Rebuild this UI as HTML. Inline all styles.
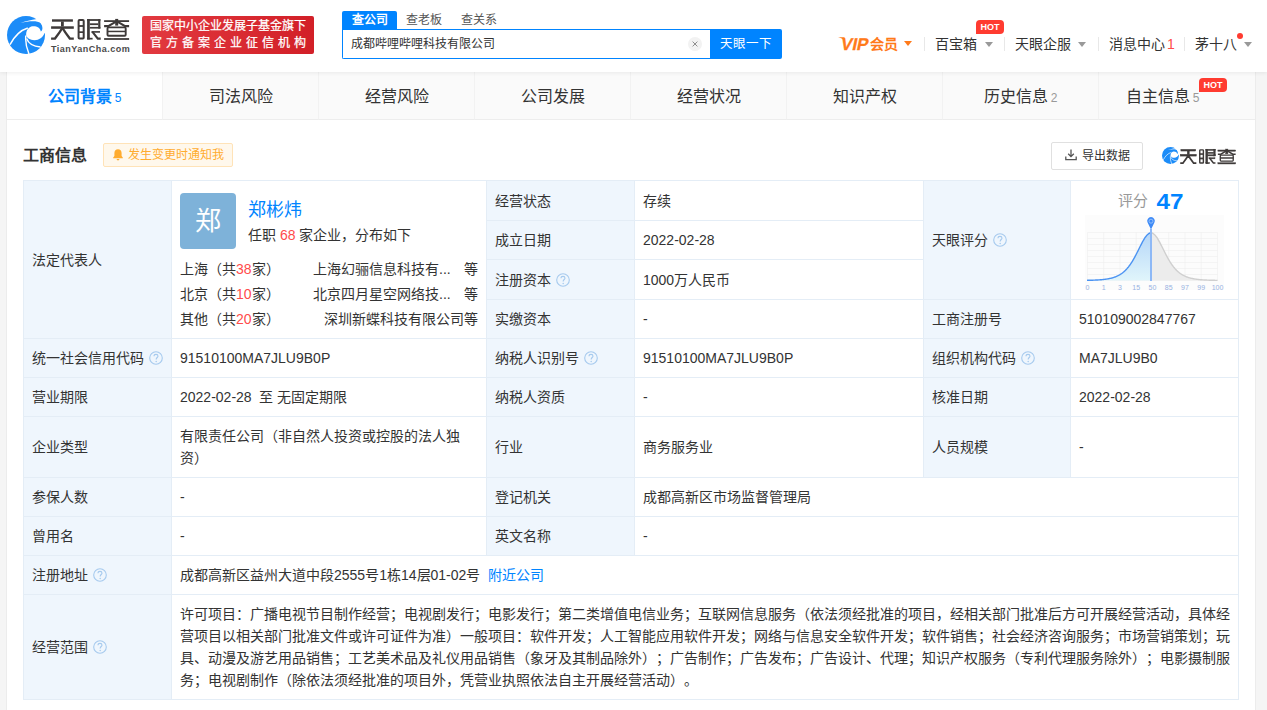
<!DOCTYPE html>
<html lang="zh-CN"><head><meta charset="utf-8">
<style>
*{box-sizing:border-box;margin:0;padding:0}
html,body{text-spacing-trim:space-all;width:1267px;height:710px;overflow:hidden;background:#f5f5f5;font-family:"Liberation Sans",sans-serif;color:#333;font-size:14px}
.abs{position:absolute}
#hdr{position:absolute;left:0;top:0;width:1267px;height:72px;background:#fff;box-shadow:0 1px 4px rgba(0,0,0,0.07);z-index:2}
#card{position:absolute;left:7px;top:72px;width:1248px;height:650px;background:#fff;box-shadow:0 0 0 1px #ececec}
.tabs{position:absolute;left:0;top:0;width:1248px;height:48px;background:#fafafa}
.tab{position:absolute;top:0;height:48px;width:156px;border-right:1px solid #f2f2f2;border-bottom:1px solid #ededed;font-size:16px;line-height:47px;padding-top:1px;text-align:center;color:#333}
.tab.on{background:#fff;color:#0084ff;font-weight:bold}
.tab sup{font-size:12px;color:#999;vertical-align:baseline;font-weight:normal;margin-left:3px}
.tab.on sup{color:#0084ff}
table{position:absolute;left:16px;top:108px;border-collapse:collapse;table-layout:fixed}
td{border:1px solid #e4edf6;padding:0 8px;font-size:14px;line-height:22px;color:#333;vertical-align:middle}
td.l{background:#eff6fd}
.q{display:inline-block;width:14px;height:14px;margin-left:5px;flex:none}
.red{color:#ff4b4b}

#tbl{position:absolute;left:0;top:0;z-index:3}
.c{position:absolute;border:1px solid #e4edf6;background:#fff;padding:0 8px;display:flex;align-items:center;font-size:14px;line-height:22px;color:#333;white-space:nowrap}
.c.l{background:#eff6fd}
.scope{white-space:normal}
.sl{white-space:nowrap;text-align:justify;text-align-last:justify;width:1050px}
.sl.last{text-align-last:left}
</style></head><body><svg width="0" height="0" style="position:absolute"><defs><g id="qi"><circle cx="7" cy="7" r="6.3" fill="none" stroke="#a6caee" stroke-width="1.1"/><path d="M5,5.3 C5,4 6,3.4 7,3.4 C8.1,3.4 9,4.1 9,5.2 C9,6.4 7.2,6.6 7.2,8.2 L7.2,8.6" fill="none" stroke="#a6caee" stroke-width="1.1"/><circle cx="7.2" cy="10.4" r="0.75" fill="#a6caee"/></g>
<g id="lt"><g fill="#3e3a39">
<rect x="52" y="19.3" width="20.9" height="2.4"/><rect x="61" y="21.5" width="2.8" height="5"/><rect x="51.1" y="26.3" width="22.7" height="2.5"/>

<rect x="87.1" y="19.1" width="2.7" height="20.4"/><rect x="87.1" y="19.1" width="13.3" height="1.8"/><rect x="98.2" y="19.1" width="2.2" height="9.5"/>
<rect x="89.8" y="23.3" width="8.4" height="1.8"/><rect x="89.8" y="26.9" width="10.6" height="1.7"/><rect x="87.1" y="37.8" width="5.5" height="1.7"/>
<rect x="91.5" y="31.1" width="8.5" height="1.6"/>
<rect x="104.1" y="20.2" width="25" height="1.8"/><rect x="115.2" y="18.9" width="3" height="6.7"/>
<rect x="104.1" y="38.1" width="25" height="1.8"/><rect x="107.5" y="30.7" width="18.2" height="1.5"/>
</g><g fill="none" stroke="#3e3a39">
<rect x="78.6" y="20.1" width="5.1" height="18.4" rx="0.8" stroke-width="2"/>
<path d="M116,21.6 L108.3,26.1 L104.1,26.1 M117.4,21.6 L125.1,26.1 L129.1,26.1" stroke-width="2.1"/><path d="M62.3,28 C60,32 57,36 55,38.6 L51.1,38.6 M62.5,28 C64.8,32 67.8,36 69.8,38.6 L73.8,38.6" stroke-width="2.4"/><path d="M92.3,31.6 L97.8,38.6 L100.7,38.6" stroke-width="2.1"/>
<rect x="107.5" y="27.4" width="18.2" height="8.4" rx="1" stroke-width="1.9"/>
</g><g fill="#3e3a39"><rect x="78.5" y="25.1" width="5.3" height="1.8"/><rect x="78.5" y="31.3" width="5.3" height="1.7"/></g></g>
<g id="logo">
<circle cx="19" cy="19" r="19" fill="#1c8cf8"/>
<path d="M13.4,6.9 C18,5.2 24,3.6 29.8,2.9 L40,-2 L40,17 L37.6,17 C36,21.5 32,24.2 27.5,24.2 C23,24.2 20,22 19.2,19.5 C18.8,14.5 21.5,10.8 25.5,10.2 C29.5,9.8 33.3,11.5 33.8,15.5 C36,14.5 36,10 33.5,7 C30.5,4.4 22,4.7 13.4,6.9 Z" fill="#fff"/>
<path d="M3,28.6 C7,21 12.5,14.5 20.8,12" fill="none" stroke="#fff" stroke-width="1.5"/>
<path d="M18.8,19.5 C18.2,26 19.2,31.5 22,38" fill="none" stroke="#fff" stroke-width="1.4"/>
<path d="M19.6,22.5 C21.5,27.5 26,30.5 33.5,31" fill="none" stroke="#fff" stroke-width="1.4"/>
</g></defs></svg>
<div id="hdr">
  <!-- logo -->
  <svg class="abs" style="left:7px;top:16px" width="38" height="38" viewBox="0 0 38 38"><use href="#logo"/></svg>
  <svg class="abs" style="left:48px;top:16px" width="86" height="28" viewBox="48 16 86 28"><use href="#lt"/></svg>
  <div class="abs" style="left:51px;top:43px;font-size:9px;line-height:12px;font-weight:bold;color:#4a4a4a;letter-spacing:0.5px">TianYanCha.com</div>
  <!-- red banner -->
  <div class="abs" style="left:142px;top:16px;width:172px;height:38px;border-radius:2px;background:linear-gradient(90deg,#e23a40,#d21f27);color:#fff;font-size:12px;line-height:17px;-webkit-text-stroke:0.25px #fff">
    <div class="abs" style="left:8px;top:2px;white-space:nowrap">国家中小企业发展子基金旗下</div>
    <div class="abs" style="left:8px;top:19px;white-space:nowrap;letter-spacing:4px">官方备案企业征信机构</div>
  </div>
  <!-- search -->
  <div class="abs" style="left:342px;top:11px;width:55px;height:18px;background:#0084ff;border-radius:2px 2px 0 0;color:#fff;font-size:12px;line-height:18px;text-align:center;font-weight:bold">查公司</div>
  <div class="abs" style="left:406px;top:11px;font-size:12px;line-height:18px;color:#555">查老板</div>
  <div class="abs" style="left:461px;top:11px;font-size:12px;line-height:18px;color:#555">查关系</div>
  <div class="abs" style="left:342px;top:29px;width:369px;height:30px;border:1px solid #0084ff;border-right:none;border-radius:0 0 0 2px;background:#fff"></div>
  <div class="abs" style="left:351px;top:35px;font-size:12px;line-height:18px;color:#333">成都哔哩哔哩科技有限公司</div>
  <svg class="abs" style="left:688px;top:37px" width="14" height="14" viewBox="0 0 14 14"><circle cx="7" cy="7" r="7" fill="#f2f2f2"/><path d="M4.6,4.6 L9.4,9.4 M9.4,4.6 L4.6,9.4" stroke="#8c8c8c" stroke-width="1"/></svg>
  <div class="abs" style="left:710px;top:29px;width:72px;height:30px;background:#0084ff;border-radius:0 2px 2px 0;color:#fff;font-size:12.5px;line-height:30px;text-align:center">天眼一下</div>
  <!-- right nav -->
  <div class="abs" style="left:839px;top:35px;font-size:17px;line-height:20px;color:#ff7a1a;font-weight:bold;white-space:nowrap;transform:skewX(-12deg);transform-origin:0 100%;-webkit-text-stroke:0.3px #ff7a1a">VIP</div><svg class="abs" style="left:838px;top:37px" width="8" height="5" viewBox="0 0 8 5"><path d="M0,0.2 L6.5,0.2 L7,3.6 C5,1.8 2.5,1 0,0.2Z" fill="#ff7a1a"/></svg><div class="abs" style="left:870px;top:35px;font-size:14px;line-height:18px;color:#ff7a1a;font-weight:bold;white-space:nowrap">会员</div>
  <div class="abs" style="left:904px;top:41px;width:0;height:0;border-left:4px solid transparent;border-right:4px solid transparent;border-top:5px solid #ff7a1a"></div>
  <div class="abs" style="left:924px;top:37px;width:1px;height:14px;background:#e8e8e8"></div>
  <div class="abs" style="left:935px;top:35px;font-size:14px;line-height:18px;color:#333">百宝箱</div>
  <div class="abs" style="left:985px;top:42px;width:0;height:0;border-left:4px solid transparent;border-right:4px solid transparent;border-top:5px solid #999"></div>
  <div class="abs" style="left:976px;top:20px;width:28px;height:14px;background:#ff3b30;border-radius:4px 4px 4px 0;color:#fff;font-size:9px;font-weight:bold;line-height:14px;text-align:center">HOT</div>
  <div class="abs" style="left:1004px;top:37px;width:1px;height:14px;background:#e8e8e8"></div>
  <div class="abs" style="left:1015px;top:35px;font-size:14px;line-height:18px;color:#333">天眼企服</div>
  <div class="abs" style="left:1078px;top:42px;width:0;height:0;border-left:4px solid transparent;border-right:4px solid transparent;border-top:5px solid #999"></div>
  <div class="abs" style="left:1098px;top:37px;width:1px;height:14px;background:#e8e8e8"></div>
  <div class="abs" style="left:1109px;top:35px;font-size:14px;line-height:18px;color:#333">消息中心<span class="red" style="margin-left:2px">1</span></div>
  <div class="abs" style="left:1184px;top:37px;width:1px;height:14px;background:#e8e8e8"></div>
  <div class="abs" style="left:1195px;top:35px;font-size:14px;line-height:18px;color:#333">茅十八</div>
  <div class="abs" style="left:1237px;top:33px;width:6px;height:6px;border-radius:50%;background:#ff3b30"></div>
  <div class="abs" style="left:1244px;top:42px;width:0;height:0;border-left:4px solid transparent;border-right:4px solid transparent;border-top:5px solid #999"></div>
</div>

<div id="card">
  <div class="tabs">
    <div class="tab on" style="left:0">公司背景<sup>5</sup></div>
    <div class="tab" style="left:156px">司法风险</div>
    <div class="tab" style="left:312px">经营风险</div>
    <div class="tab" style="left:468px">公司发展</div>
    <div class="tab" style="left:624px">经营状况</div>
    <div class="tab" style="left:780px">知识产权</div>
    <div class="tab" style="left:936px">历史信息<sup>2</sup></div>
    <div class="tab" style="left:1092px;border-right:none;padding-right:29px">自主信息<sup>5</sup></div>
  </div>
  <!-- section title -->
  <div class="abs" style="left:16px;top:73px;font-size:16px;line-height:22px;font-weight:bold;color:#333">工商信息</div>
</div>
<div id="tbl">
<div class="c l" style="left:23px;top:180px;width:149px;height:159px">法定代表人</div>
<div class="c" style="left:171px;top:180px;width:316px;height:159px"><!--rep--></div>
<div class="c l" style="left:486px;top:180px;width:149px;height:41px">经营状态</div>
<div class="c" style="left:634px;top:180px;width:290px;height:41px">存续</div>
<div class="c l" style="left:486px;top:220px;width:149px;height:40px">成立日期</div>
<div class="c" style="left:634px;top:220px;width:290px;height:40px">2022-02-28</div>
<div class="c l" style="left:486px;top:259px;width:149px;height:41px">注册资本<svg class="q" viewBox="0 0 14 14"><use href="#qi"/></svg></div>
<div class="c" style="left:634px;top:259px;width:290px;height:41px">1000万人民币</div>
<div class="c l" style="left:486px;top:299px;width:149px;height:40px">实缴资本</div>
<div class="c" style="left:634px;top:299px;width:290px;height:40px">-</div>
<div class="c l" style="left:923px;top:180px;width:148px;height:120px">天眼评分<svg class="q" viewBox="0 0 14 14"><use href="#qi"/></svg></div>
<div class="c" style="left:1070px;top:180px;width:169px;height:120px"><!--chart--></div>
<div class="c l" style="left:923px;top:299px;width:148px;height:40px">工商注册号</div>
<div class="c" style="left:1070px;top:299px;width:169px;height:40px">510109002847767</div>
<div class="c l" style="left:23px;top:338px;width:149px;height:40px">统一社会信用代码<svg class="q" viewBox="0 0 14 14"><use href="#qi"/></svg></div>
<div class="c" style="left:171px;top:338px;width:316px;height:40px">91510100MA7JLU9B0P</div>
<div class="c l" style="left:486px;top:338px;width:149px;height:40px">纳税人识别号<svg class="q" viewBox="0 0 14 14"><use href="#qi"/></svg></div>
<div class="c" style="left:634px;top:338px;width:290px;height:40px">91510100MA7JLU9B0P</div>
<div class="c l" style="left:923px;top:338px;width:148px;height:40px">组织机构代码<svg class="q" viewBox="0 0 14 14"><use href="#qi"/></svg></div>
<div class="c" style="left:1070px;top:338px;width:169px;height:40px">MA7JLU9B0</div>
<div class="c l" style="left:23px;top:377px;width:149px;height:40px">营业期限</div>
<div class="c" style="left:171px;top:377px;width:316px;height:40px">2022-02-28&nbsp; 至 无固定期限</div>
<div class="c l" style="left:486px;top:377px;width:149px;height:40px">纳税人资质</div>
<div class="c" style="left:634px;top:377px;width:290px;height:40px">-</div>
<div class="c l" style="left:923px;top:377px;width:148px;height:40px">核准日期</div>
<div class="c" style="left:1070px;top:377px;width:169px;height:40px">2022-02-28</div>
<div class="c l" style="left:23px;top:416px;width:149px;height:62px">企业类型</div>
<div class="c" style="left:171px;top:416px;width:316px;height:62px">有限责任公司（非自然人投资或控股的法人独<br>资）</div>
<div class="c l" style="left:486px;top:416px;width:149px;height:62px">行业</div>
<div class="c" style="left:634px;top:416px;width:290px;height:62px">商务服务业</div>
<div class="c l" style="left:923px;top:416px;width:148px;height:62px">人员规模</div>
<div class="c" style="left:1070px;top:416px;width:169px;height:62px">-</div>
<div class="c l" style="left:23px;top:477px;width:149px;height:40px">参保人数</div>
<div class="c" style="left:171px;top:477px;width:316px;height:40px">-</div>
<div class="c l" style="left:486px;top:477px;width:149px;height:40px">登记机关</div>
<div class="c" style="left:634px;top:477px;width:605px;height:40px">成都高新区市场监督管理局</div>
<div class="c l" style="left:23px;top:516px;width:149px;height:40px">曾用名</div>
<div class="c" style="left:171px;top:516px;width:316px;height:40px">-</div>
<div class="c l" style="left:486px;top:516px;width:149px;height:40px">英文名称</div>
<div class="c" style="left:634px;top:516px;width:605px;height:40px">-</div>
<div class="c l" style="left:23px;top:555px;width:149px;height:40px">注册地址<svg class="q" viewBox="0 0 14 14"><use href="#qi"/></svg></div>
<div class="c" style="left:171px;top:555px;width:1068px;height:40px">成都高新区益州大道中段2555号1栋14层01-02号 <span style="color:#0084ff;margin-left:8px">附近公司</span></div>
<div class="c l" style="left:23px;top:594px;width:149px;height:106px">经营范围<svg class="q" viewBox="0 0 14 14"><use href="#qi"/></svg></div>
<div class="c" style="left:171px;top:594px;width:1068px;height:106px"><div class="scope"><div class="sl">许可项目：广播电视节目制作经营；电视剧发行；电影发行；第二类增值电信业务；互联网信息服务（依法须经批准的项目，经相关部门批准后方可开展经营活动，具体经</div><div class="sl">营项目以相关部门批准文件或许可证件为准）一般项目：软件开发；人工智能应用软件开发；网络与信息安全软件开发；软件销售；社会经济咨询服务；市场营销策划；玩</div><div class="sl">具、动漫及游艺用品销售；工艺美术品及礼仪用品销售（象牙及其制品除外）；广告制作；广告发布；广告设计、代理；知识产权服务（专利代理服务除外）；电影摄制服</div><div class="sl last">务；电视剧制作（除依法须经批准的项目外，凭营业执照依法自主开展经营活动）。</div></div></div>
</div>
<svg class="abs" style="left:1071px;top:181px;z-index:4" width="167" height="118" viewBox="0 0 167 118">
<defs><linearGradient id="bg1" x1="0" y1="0" x2="0" y2="1"><stop offset="0" stop-color="#b5d6f8"/><stop offset="1" stop-color="#e0f5fb"/></linearGradient></defs>
<rect x="14" y="34" width="139" height="75" fill="#fcfcfc"/>
<g stroke="#eeeeee" stroke-width="0.6" fill="none"><line x1="16.50" y1="51.5" x2="16.50" y2="99.5"/><line x1="32.75" y1="51.5" x2="32.75" y2="99.5"/><line x1="49.00" y1="51.5" x2="49.00" y2="99.5"/><line x1="65.25" y1="51.5" x2="65.25" y2="99.5"/><line x1="81.50" y1="51.5" x2="81.50" y2="99.5"/><line x1="97.75" y1="51.5" x2="97.75" y2="99.5"/><line x1="114.00" y1="51.5" x2="114.00" y2="99.5"/><line x1="130.25" y1="51.5" x2="130.25" y2="99.5"/><line x1="146.50" y1="51.5" x2="146.50" y2="99.5"/><line x1="16.5" y1="51.5" x2="146.5" y2="51.5"/><line x1="16.5" y1="57.5" x2="146.5" y2="57.5"/><line x1="16.5" y1="63.5" x2="146.5" y2="63.5"/><line x1="16.5" y1="69.5" x2="146.5" y2="69.5"/><line x1="16.5" y1="75.5" x2="146.5" y2="75.5"/><line x1="16.5" y1="81.5" x2="146.5" y2="81.5"/><line x1="16.5" y1="87.5" x2="146.5" y2="87.5"/><line x1="16.5" y1="93.5" x2="146.5" y2="93.5"/><line x1="16.5" y1="99.5" x2="146.5" y2="99.5"/></g>
<polygon points="16.00,99.33 16.50,99.32 17.00,99.31 17.50,99.30 18.00,99.29 18.50,99.28 19.00,99.27 19.50,99.25 20.00,99.24 20.50,99.23 21.00,99.21 21.50,99.19 22.00,99.18 22.50,99.16 23.00,99.14 23.50,99.12 24.00,99.10 24.50,99.07 25.00,99.05 25.50,99.03 26.00,99.00 26.50,98.97 27.00,98.94 27.50,98.91 28.00,98.88 28.50,98.84 29.00,98.80 29.50,98.77 30.00,98.72 30.50,98.68 31.00,98.63 31.50,98.59 32.00,98.54 32.50,98.48 33.00,98.42 33.50,98.36 34.00,98.30 34.50,98.23 35.00,98.16 35.50,98.09 36.00,98.01 36.50,97.93 37.00,97.84 37.50,97.75 38.00,97.65 38.50,97.55 39.00,97.44 39.50,97.33 40.00,97.21 40.50,97.08 41.00,96.95 41.50,96.81 42.00,96.66 42.50,96.51 43.00,96.34 43.50,96.17 44.00,95.99 44.50,95.80 45.00,95.60 45.50,95.39 46.00,95.17 46.50,94.94 47.00,94.69 47.50,94.44 48.00,94.17 48.50,93.88 49.00,93.59 49.50,93.27 50.00,92.95 50.50,92.61 51.00,92.25 51.50,91.87 52.00,91.48 52.50,91.07 53.00,90.64 53.50,90.19 54.00,89.72 54.50,89.23 55.00,88.72 55.50,88.19 56.00,87.64 56.50,87.06 57.00,86.46 57.50,85.84 58.00,85.19 58.50,84.52 59.00,83.83 59.50,83.11 60.00,82.37 60.50,81.61 61.00,80.82 61.50,80.01 62.00,79.17 62.50,78.32 63.00,77.44 63.50,76.54 64.00,75.62 64.50,74.69 65.00,73.74 65.50,72.77 66.00,71.79 66.50,70.80 67.00,69.81 67.50,68.80 68.00,67.80 68.50,66.79 69.00,65.79 69.50,64.79 70.00,63.81 70.50,62.83 71.00,61.88 71.50,60.94 72.00,60.03 72.50,59.15 73.00,58.30 73.50,57.49 74.00,56.72 74.50,56.00 75.00,55.32 75.50,54.70 76.00,54.13 76.50,53.62 77.00,53.17 77.50,52.79 78.00,52.47 78.50,52.22 79.00,52.04 79.50,51.94 80.00,51.90 80.00,99.5 16,99.5" fill="url(#bg1)"/>
<polygon points="80.00,51.90 80.50,51.94 81.00,52.04 81.50,52.22 82.00,52.47 82.50,52.79 83.00,53.17 83.50,53.62 84.00,54.13 84.50,54.70 85.00,55.32 85.50,56.00 86.00,56.72 86.50,57.49 87.00,58.30 87.50,59.15 88.00,60.03 88.50,60.94 89.00,61.88 89.50,62.83 90.00,63.81 90.50,64.79 91.00,65.79 91.50,66.79 92.00,67.80 92.50,68.80 93.00,69.81 93.50,70.80 94.00,71.79 94.50,72.77 95.00,73.74 95.50,74.69 96.00,75.62 96.50,76.54 97.00,77.44 97.50,78.32 98.00,79.17 98.50,80.01 99.00,80.82 99.50,81.61 100.00,82.37 100.50,83.11 101.00,83.83 101.50,84.52 102.00,85.19 102.50,85.84 103.00,86.46 103.50,87.06 104.00,87.64 104.50,88.19 105.00,88.72 105.50,89.23 106.00,89.72 106.50,90.19 107.00,90.64 107.50,91.07 108.00,91.48 108.50,91.87 109.00,92.25 109.50,92.61 110.00,92.95 110.50,93.27 111.00,93.59 111.50,93.88 112.00,94.17 112.50,94.44 113.00,94.69 113.50,94.94 114.00,95.17 114.50,95.39 115.00,95.60 115.50,95.80 116.00,95.99 116.50,96.17 117.00,96.34 117.50,96.51 118.00,96.66 118.50,96.81 119.00,96.95 119.50,97.08 120.00,97.21 120.50,97.33 121.00,97.44 121.50,97.55 122.00,97.65 122.50,97.75 123.00,97.84 123.50,97.93 124.00,98.01 124.50,98.09 125.00,98.16 125.50,98.23 126.00,98.30 126.50,98.36 127.00,98.42 127.50,98.48 128.00,98.54 128.50,98.59 129.00,98.63 129.50,98.68 130.00,98.72 130.50,98.77 131.00,98.80 131.50,98.84 132.00,98.88 132.50,98.91 133.00,98.94 133.50,98.97 134.00,99.00 134.50,99.03 135.00,99.05 135.50,99.07 136.00,99.10 136.50,99.12 137.00,99.14 137.50,99.16 138.00,99.18 138.50,99.19 139.00,99.21 139.50,99.23 140.00,99.24 140.50,99.25 141.00,99.27 141.50,99.28 142.00,99.29 142.50,99.30 143.00,99.31 143.50,99.32 144.00,99.33 144.50,99.34 145.00,99.35 145.50,99.36 146.00,99.37 146.50,99.37 146.5,99.5 80.00,99.5" fill="#ececec"/>
<polyline points="16.00,99.33 16.50,99.32 17.00,99.31 17.50,99.30 18.00,99.29 18.50,99.28 19.00,99.27 19.50,99.25 20.00,99.24 20.50,99.23 21.00,99.21 21.50,99.19 22.00,99.18 22.50,99.16 23.00,99.14 23.50,99.12 24.00,99.10 24.50,99.07 25.00,99.05 25.50,99.03 26.00,99.00 26.50,98.97 27.00,98.94 27.50,98.91 28.00,98.88 28.50,98.84 29.00,98.80 29.50,98.77 30.00,98.72 30.50,98.68 31.00,98.63 31.50,98.59 32.00,98.54 32.50,98.48 33.00,98.42 33.50,98.36 34.00,98.30 34.50,98.23 35.00,98.16 35.50,98.09 36.00,98.01 36.50,97.93 37.00,97.84 37.50,97.75 38.00,97.65 38.50,97.55 39.00,97.44 39.50,97.33 40.00,97.21 40.50,97.08 41.00,96.95 41.50,96.81 42.00,96.66 42.50,96.51 43.00,96.34 43.50,96.17 44.00,95.99 44.50,95.80 45.00,95.60 45.50,95.39 46.00,95.17 46.50,94.94 47.00,94.69 47.50,94.44 48.00,94.17 48.50,93.88 49.00,93.59 49.50,93.27 50.00,92.95 50.50,92.61 51.00,92.25 51.50,91.87 52.00,91.48 52.50,91.07 53.00,90.64 53.50,90.19 54.00,89.72 54.50,89.23 55.00,88.72 55.50,88.19 56.00,87.64 56.50,87.06 57.00,86.46 57.50,85.84 58.00,85.19 58.50,84.52 59.00,83.83 59.50,83.11 60.00,82.37 60.50,81.61 61.00,80.82 61.50,80.01 62.00,79.17 62.50,78.32 63.00,77.44 63.50,76.54 64.00,75.62 64.50,74.69 65.00,73.74 65.50,72.77 66.00,71.79 66.50,70.80 67.00,69.81 67.50,68.80 68.00,67.80 68.50,66.79 69.00,65.79 69.50,64.79 70.00,63.81 70.50,62.83 71.00,61.88 71.50,60.94 72.00,60.03 72.50,59.15 73.00,58.30 73.50,57.49 74.00,56.72 74.50,56.00 75.00,55.32 75.50,54.70 76.00,54.13 76.50,53.62 77.00,53.17 77.50,52.79 78.00,52.47 78.50,52.22 79.00,52.04 79.50,51.94 80.00,51.90" fill="none" stroke="#4b93f2" stroke-width="1.4"/>
<polyline points="80.00,51.90 80.50,51.94 81.00,52.04 81.50,52.22 82.00,52.47 82.50,52.79 83.00,53.17 83.50,53.62 84.00,54.13 84.50,54.70 85.00,55.32 85.50,56.00 86.00,56.72 86.50,57.49 87.00,58.30 87.50,59.15 88.00,60.03 88.50,60.94 89.00,61.88 89.50,62.83 90.00,63.81 90.50,64.79 91.00,65.79 91.50,66.79 92.00,67.80 92.50,68.80 93.00,69.81 93.50,70.80 94.00,71.79 94.50,72.77 95.00,73.74 95.50,74.69 96.00,75.62 96.50,76.54 97.00,77.44 97.50,78.32 98.00,79.17 98.50,80.01 99.00,80.82 99.50,81.61 100.00,82.37 100.50,83.11 101.00,83.83 101.50,84.52 102.00,85.19 102.50,85.84 103.00,86.46 103.50,87.06 104.00,87.64 104.50,88.19 105.00,88.72 105.50,89.23 106.00,89.72 106.50,90.19 107.00,90.64 107.50,91.07 108.00,91.48 108.50,91.87 109.00,92.25 109.50,92.61 110.00,92.95 110.50,93.27 111.00,93.59 111.50,93.88 112.00,94.17 112.50,94.44 113.00,94.69 113.50,94.94 114.00,95.17 114.50,95.39 115.00,95.60 115.50,95.80 116.00,95.99 116.50,96.17 117.00,96.34 117.50,96.51 118.00,96.66 118.50,96.81 119.00,96.95 119.50,97.08 120.00,97.21 120.50,97.33 121.00,97.44 121.50,97.55 122.00,97.65 122.50,97.75 123.00,97.84 123.50,97.93 124.00,98.01 124.50,98.09 125.00,98.16 125.50,98.23 126.00,98.30 126.50,98.36 127.00,98.42 127.50,98.48 128.00,98.54 128.50,98.59 129.00,98.63 129.50,98.68 130.00,98.72 130.50,98.77 131.00,98.80 131.50,98.84 132.00,98.88 132.50,98.91 133.00,98.94 133.50,98.97 134.00,99.00 134.50,99.03 135.00,99.05 135.50,99.07 136.00,99.10 136.50,99.12 137.00,99.14 137.50,99.16 138.00,99.18 138.50,99.19 139.00,99.21 139.50,99.23 140.00,99.24 140.50,99.25 141.00,99.27 141.50,99.28 142.00,99.29 142.50,99.30 143.00,99.31 143.50,99.32 144.00,99.33 144.50,99.34 145.00,99.35 145.50,99.36 146.00,99.37 146.50,99.37" fill="none" stroke="#cfcfcf" stroke-width="1.4"/>
<rect x="79.00" y="48" width="2" height="52" fill="#8db8f6"/>
<path d="M80.00,48.5 L76.60,41.6 A3.8,3.8 0 1 1 83.40,41.6 Z" fill="#3d8af7"/>
<circle cx="80.00" cy="40.2" r="2" fill="none" stroke="#9cc4fb" stroke-width="0.9"/>
<g fill="#98b2e2" font-family="Liberation Sans" font-size="7" text-anchor="middle"><text x="16.50" y="108.5">0</text><text x="32.75" y="108.5">1</text><text x="49.00" y="108.5">3</text><text x="65.25" y="108.5">15</text><text x="81.50" y="108.5">50</text><text x="97.75" y="108.5">85</text><text x="114.00" y="108.5">97</text><text x="130.25" y="108.5">99</text><text x="146.50" y="108.5">100</text></g>
<text x="47" y="25" font-family="Liberation Sans" font-size="15" fill="#999">评分</text>
<text transform="translate(85.5,28) scale(1.1,1)" font-family="Liberation Sans" font-size="22" font-weight="bold" fill="#0084ff">47</text>
</svg>
<div id="ovl" style="position:absolute;left:0;top:0;z-index:5">
  <!-- rep -->
  <div class="abs" style="left:180px;top:193px;width:56px;height:56px;border-radius:4px;background:#7eb2d9;color:#fff;font-size:26px;line-height:56px;text-align:center">郑</div>
  <div class="abs" style="left:248px;top:198px;font-size:18px;line-height:24px;color:#0084ff;white-space:nowrap">郑彬炜</div>
  <div class="abs" style="left:248px;top:224px;font-size:14px;line-height:22px;color:#333;white-space:nowrap">任职 <span class="red">68</span> 家企业，分布如下</div>
  <div class="abs" style="left:180px;top:257px;font-size:14px;line-height:25px;color:#333;white-space:nowrap">上海（共<span class="red">38</span>家）<br>北京（共<span class="red">10</span>家）<br>其他（共<span class="red">20</span>家）</div>
  <div class="abs" style="left:313px;top:257px;font-size:14px;line-height:25px;color:#333;white-space:nowrap">上海幻骊信息科技有...</div>
  <div class="abs" style="left:313px;top:282px;font-size:14px;line-height:25px;color:#333;white-space:nowrap">北京四月星空网络技...</div>
  <div class="abs" style="left:324px;top:307px;font-size:14px;line-height:25px;color:#333;white-space:nowrap">深圳新蝶科技有限公司</div>
  <div class="abs" style="left:464px;top:257px;font-size:14px;line-height:25px;color:#333;white-space:nowrap">等<br>等<br>等</div>
  <!-- notify badge -->
  <div class="abs" style="left:103px;top:143px;width:130px;height:24px;border:1px solid #ffe3b8;background:#fff8ec;border-radius:2px"></div>
  <svg class="abs" style="left:112px;top:148px" width="12" height="13" viewBox="0 0 12 13"><path d="M6 1.2c-2.2 0-3.6 1.7-3.6 3.8v3L1.2 9.4v.8h9.6v-.8L9.6 8V5c0-2.1-1.4-3.8-3.6-3.8z" fill="#ffac2f"/><path d="M4.6 11h2.8a1.4 1.4 0 0 1-2.8 0z" fill="#ffac2f"/></svg>
  <div class="abs" style="left:128px;top:146px;font-size:12px;line-height:18px;color:#ffac2f;white-space:nowrap">发生变更时通知我</div>
  <!-- export -->
  <div class="abs" style="left:1051px;top:142px;width:92px;height:28px;border:1px solid #e0e0e0;border-radius:2px;background:#fff"></div>
  <svg class="abs" style="left:1064px;top:148px" width="14" height="14" viewBox="0 0 14 14"><path d="M7 1.5v7M4.2 5.8L7 8.6l2.8-2.8M1.8 8.5v3.2h10.4V8.5" fill="none" stroke="#555" stroke-width="1.3"/></svg>
  <div class="abs" style="left:1082px;top:147px;font-size:12px;line-height:18px;color:#333;white-space:nowrap">导出数据</div>
  <!-- small logo -->
  <svg class="abs" style="left:1162px;top:147px" width="17" height="17" viewBox="0 0 38 38"><use href="#logo"/></svg>
  <svg class="abs" style="left:1177.6px;top:146.9px" width="61.15" height="19.9" viewBox="48 16 86 28"><use href="#lt" stroke="#3e3a39" stroke-width="0.6"/></svg>
  <!-- tab HOT -->
  <div class="abs" style="left:1199px;top:78px;width:28px;height:14px;background:#ff3b30;border-radius:4px 4px 4px 0;color:#fff;font-size:9px;font-weight:bold;line-height:14px;text-align:center">HOT</div>
</div>
</body></html>
